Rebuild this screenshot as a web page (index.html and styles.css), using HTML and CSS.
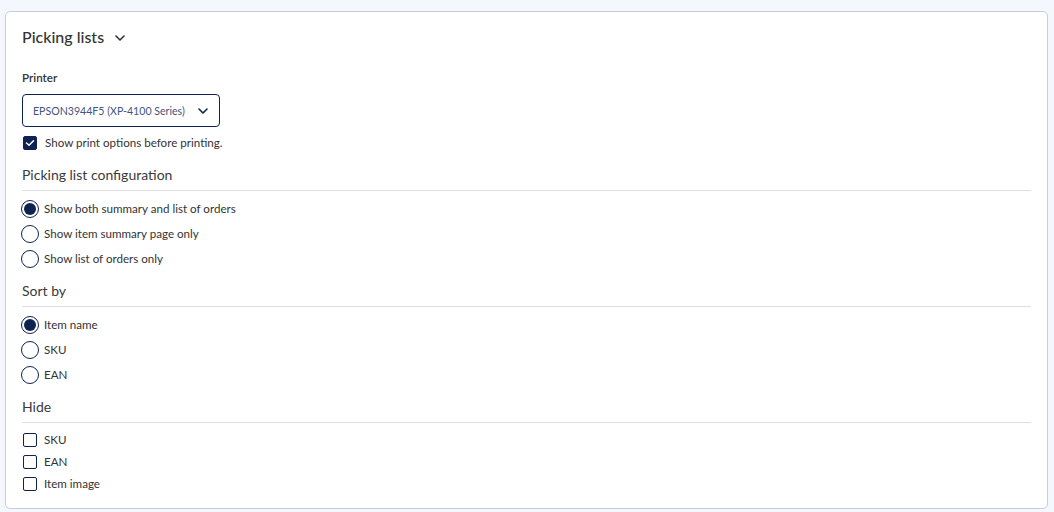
FILE: index.html
```html
<!DOCTYPE html>
<html lang="en">
<head>
<meta charset="utf-8">
<title>Picking lists</title>
<link rel="stylesheet" href="styles.css">
</head>
<body>
<div class="card">
  <div class="title-row">
    <h2 class="title">Picking lists</h2>
    <svg class="title-chev" width="12" height="8" viewBox="0 0 12 8"><path d="M2 2 L6 6 L10 2" fill="none" stroke="#333" stroke-width="1.6" stroke-linecap="round" stroke-linejoin="round"/></svg>
  </div>

  <div class="field-label">Printer</div>
  <div class="select">
    <span class="select-text">EPSON3944F5 (XP-4100 Series)</span>
    <svg class="select-chev" width="12" height="8" viewBox="0 0 12 8"><path d="M2 2 L6 6 L10 2" fill="none" stroke="#0f2351" stroke-width="1.6" stroke-linecap="round" stroke-linejoin="round"/></svg>
  </div>
  <label class="check-row first">
    <span class="checkbox checked"><svg width="10" height="8" viewBox="0 0 10 8"><path d="M1.5 4 L4 6.3 L8.5 1.7" fill="none" stroke="#fff" stroke-width="1.5" stroke-linecap="round" stroke-linejoin="round"/></svg></span>
    <span>Show print options before printing.</span>
  </label>

  <div class="section">
    <div class="section-title">Picking list configuration</div>
    <div class="radio-list">
      <div class="radio-row"><span class="radio checked"></span><span>Show both summary and list of orders</span></div>
      <div class="radio-row"><span class="radio"></span><span>Show item summary page only</span></div>
      <div class="radio-row"><span class="radio"></span><span>Show list of orders only</span></div>
    </div>
  </div>

  <div class="section">
    <div class="section-title">Sort by</div>
    <div class="radio-list">
      <div class="radio-row"><span class="radio checked"></span><span>Item name</span></div>
      <div class="radio-row"><span class="radio"></span><span>SKU</span></div>
      <div class="radio-row"><span class="radio"></span><span>EAN</span></div>
    </div>
  </div>

  <div class="section">
    <div class="section-title">Hide</div>
    <div class="check-list">
      <div class="check-item"><span class="checkbox"></span><span>SKU</span></div>
      <div class="check-item"><span class="checkbox"></span><span>EAN</span></div>
      <div class="check-item"><span class="checkbox"></span><span>Item image</span></div>
    </div>
  </div>
</div>
</body>
</html>
```

FILE: styles.css
```css
* { box-sizing: border-box; }
html, body { height: 100%; }
body {
  margin: 0;
  padding: 11px 6px 0 5px;
  background: #f4f8fe;
  font-family: "Lato", "Liberation Sans", sans-serif;
  color: #333;
  font-size: 11.6px;
}
.card {
  background: #fff;
  border: 1px solid #c9ccd3;
  border-radius: 5px;
  padding: 0 16px 13px 16px;
}
.title-row {
  display: flex;
  align-items: center;
  gap: 10px;
  margin-top: 13px;
  height: 24px;
}
.title {
  margin: 0;
  font-size: 16px;
  font-weight: 500;
  color: #333;
  line-height: 24px;
}
.title-chev { margin-top: 2px; }
.field-label {
  margin-top: 21px;
  line-height: 16px;
  font-size: 11.6px;
  font-weight: 600;
  color: #333;
}
.select {
  margin-top: 8px;
  width: 198px;
  height: 33px;
  border: 1px solid #0f2351;
  border-radius: 4px;
  display: flex;
  align-items: center;
  justify-content: space-between;
  padding: 0 10px 0 10px;
}
.select-text {
  font-size: 10.6px;
  color: #44557f;
}
.check-row, .check-item {
  display: flex;
  align-items: center;
  gap: 8px;
  height: 16px;
  line-height: 16px;
}
.check-row.first { margin-top: 8px; }
.checkbox {
  width: 14px;
  height: 14px;
  border: 1.5px solid #0f2351;
  border-radius: 2px;
  display: inline-flex;
  align-items: center;
  justify-content: center;
  flex: none;
  margin-left: 1px;
}
.checkbox.checked { background: #0f2351; }
.section-title {
  margin-top: 14px;
  font-size: 14px;
  line-height: 20px;
  color: #3a3a3a;
  padding-bottom: 5px;
  border-bottom: 1px solid #dcdfe4;
}
.section + .section .section-title { margin-top: 10px; }
.radio-list {
  margin-top: 5px;
  display: flex;
  flex-direction: column;
}
.radio-row {
  display: flex;
  align-items: center;
  gap: 5px;
  height: 25px;
}
.radio {
  width: 18px;
  height: 18px;
  border: 1px solid #0f2351;
  border-radius: 50%;
  flex: none;
  margin-left: -1px;
  position: relative;
}
.radio.checked { border-width: 1.5px; }
.radio.checked::after {
  content: "";
  position: absolute;
  left: 2px; top: 2px; right: 2px; bottom: 2px;
  border-radius: 50%;
  background: #0f2351;
}
.check-list {
  margin-top: 6px;
  display: flex;
  flex-direction: column;
}
.check-item { height: 22px; gap: 7px; }
```
